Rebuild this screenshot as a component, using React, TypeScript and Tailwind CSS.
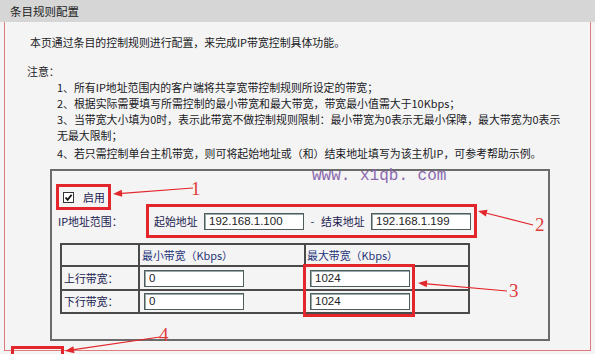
import React from "react";

const RED = "#e3262b";

// arrow: thin line with a filled head at (x2, y2)
const Arrow = ({ x1, y1, x2, y2 }: { x1: number; y1: number; x2: number; y2: number }) => {
  const dx = x2 - x1;
  const dy = y2 - y1;
  const len = Math.hypot(dx, dy);
  const ux = dx / len;
  const uy = dy / len;
  const bx = x2 - ux * 9;
  const by = y2 - uy * 9;
  const px = -uy * 3.5;
  const py = ux * 3.5;
  return (
    <g>
      <line x1={x1} y1={y1} x2={bx} y2={by} stroke={RED} strokeWidth={1.2} />
      <polygon points={`${x2},${y2} ${bx + px},${by + py} ${bx - px},${by - py}`} fill={RED} />
    </g>
  );
};

const TextBox = ({ value, w = "w-[100px]" }: { value: string; w?: string }) => (
  <div
    className={`${w} h-[17px] bg-white border border-[#4f5c5c] shadow-[inset_1px_1px_0_#9aa] pl-[4px] leading-[15px] text-[11.5px] text-[#222] font-['Liberation_Sans',sans-serif]`}
  >
    {value}
  </div>
);

const notes = [
  "1、所有IP地址范围内的客户端将共享宽带控制规则所设定的带宽；",
  "2、根据实际需要填写所需控制的最小带宽和最大带宽，带宽最小值需大于10Kbps；",
  "3、当带宽大小填为0时，表示此带宽不做控制规则限制：最小带宽为0表示无最小保障，最大带宽为0表示",
  "无最大限制；",
];

export default function App() {
  return (
    <div className="relative w-[595px] h-[354px] overflow-hidden bg-[#f4f4f4] font-['Noto_Sans_CJK_SC',sans-serif] text-[10.9px] text-[#1a1a24]">
      {/* Header */}
      <div className="h-[22px] bg-[#d6d6d6] pl-[10px] leading-[22px] text-[11.5px] text-[#222]">条目规则配置</div>

      {/* Body */}
      <div className="mx-[4px] h-[329px] border-x border-b border-[#e07b7b] pt-[12px]">
        <div className="pl-[25px] leading-[16px] whitespace-nowrap">本页通过条目的控制规则进行配置，来完成IP带宽控制具体功能。</div>
        <div className="mt-[13px] pl-[22px] leading-[16px]">注意：</div>
        <div className="pl-[52px] leading-[16px] whitespace-nowrap">
          {notes.map((n) => (
            <div key={n}>{n}</div>
          ))}
          <div className="mt-[2px]">4、若只需控制单台主机带宽，则可将起始地址或（和）结束地址填写为该主机IP，可参考帮助示例。</div>
        </div>

        {/* Frame */}
        <div className="mt-[8px] ml-[45px] w-[500px] h-[172px] border-2 border-[#6b6b6b]">
          <div className="pt-[18px] pl-[11px] h-[34px] flex items-center gap-[9px] text-[#1c2250]">
            <div className="w-[11px] h-[11px] bg-white border border-[#333] flex items-center justify-center">
              <svg width="9" height="9" viewBox="0 0 9 9">
                <path d="M1.5 4.5 L3.6 6.8 L7.6 1.8" fill="none" stroke="#111" strokeWidth={1.8} />
              </svg>
            </div>
            <span>启用</span>
          </div>

          <div className="mt-[8px] pl-[6px] h-[17px] flex items-center text-[#1c2250]">
            <span className="w-[96px]">IP地址范围：</span>
            <span className="w-[50px]">起始地址</span>
            <TextBox value="192.168.1.100" />
            <span className="w-[17px] text-center">-</span>
            <span className="w-[50px]">结束地址</span>
            <TextBox value="192.168.1.199" />
          </div>

          {/* Bandwidth table */}
          <div className="mt-[13px] ml-[8px] w-[410px] grid grid-cols-[76px_164px_162px] grid-rows-[20px_22px_21px] gap-[2px] p-[2px] bg-[#4a4a4a] text-[#1c2250]">
            <div className="bg-[#f4f4f4]" />
            <div className="bg-[#f4f4f4] pl-[2px] leading-[20px] text-[#27357a]">最小带宽（Kbps）</div>
            <div className="bg-[#f4f4f4] pl-[1px] leading-[20px] text-[#27357a]">最大带宽（Kbps）</div>

            <div className="bg-[#f4f4f4] pl-[2px] leading-[22px]">上行带宽：</div>
            <div className="bg-[#f4f4f4] pl-[4px] flex items-center">
              <TextBox value="0" />
            </div>
            <div className="bg-[#f4f4f4] pl-[4px] flex items-center">
              <TextBox value="1024" />
            </div>

            <div className="bg-[#f4f4f4] pl-[2px] leading-[21px]">下行带宽：</div>
            <div className="bg-[#f4f4f4] pl-[4px] flex items-center">
              <TextBox value="0" />
            </div>
            <div className="bg-[#f4f4f4] pl-[4px] flex items-center">
              <TextBox value="1024" />
            </div>
          </div>
        </div>
      </div>

      {/* Watermark */}
      <div className="absolute left-[312px] top-[167px] text-[16px] leading-[18px] text-[#8b68ad] font-['Liberation_Mono',monospace] whitespace-pre">
        www. x1qb. com
      </div>

      {/* Annotations */}
      <svg className="absolute inset-0 pointer-events-none" width="595" height="354" viewBox="0 0 595 354">
        <g fill="none" stroke={RED} strokeWidth={3}>
          <rect x={57.5} y={185.5} width={52} height={23} />
          <rect x={147.5} y={205.5} width={328} height={31} />
          <rect x={304.5} y={265.5} width={109} height={50} />
          <rect x={12.5} y={347.5} width={50} height={20} />
        </g>
        <Arrow x1={193} y1={188} x2={113} y2={194} />
        <Arrow x1={533} y1={225} x2={478} y2={211} />
        <Arrow x1={507} y1={291} x2={418} y2={283} />
        <Arrow x1={160} y1={337} x2={65} y2={351} />
        <g fill="#e03c3c" fontFamily="'Liberation Serif', serif" fontSize={19}>
          <text x={191} y={195}>1</text>
          <text x={535} y={231}>2</text>
          <text x={509} y={297}>3</text>
          <text x={159} y={341}>4</text>
        </g>
      </svg>
    </div>
  );
}
